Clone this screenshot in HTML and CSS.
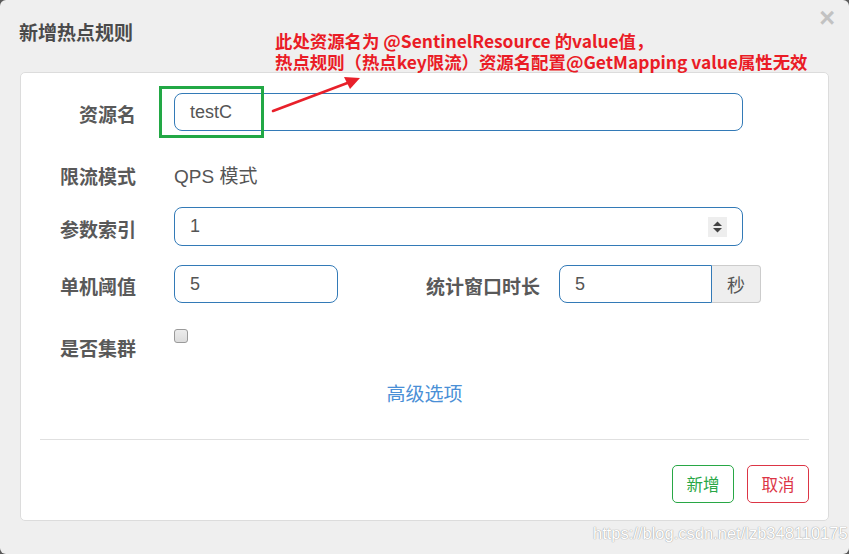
FILE: index.html
```html
<!DOCTYPE html>
<html lang="zh">
<head>
<meta charset="utf-8">
<title>新增热点规则</title>
<link rel="stylesheet" href="styles.css">
</head>
<body>
<div class="modal">
  <div class="modal-header">
    <h4 class="title">新增热点规则</h4>
    <span class="close">×</span>
  </div>
  <div class="card">
    <div class="row r1">
      <label class="lbl">资源名</label>
      <div class="input wide"><span>testC</span></div>
    </div>
    <div class="row r2">
      <label class="lbl">限流模式</label>
      <div class="static">QPS 模式</div>
    </div>
    <div class="row r3">
      <label class="lbl">参数索引</label>
      <div class="input wide num">
        <span>1</span>
        <span class="spin">
          <svg width="19" height="20" viewBox="0 0 19 20"><path d="M9.5 4.5 L14 9 L5 9 Z" fill="#444"/><path d="M5 11 L14 11 L9.5 15.5 Z" fill="#444"/></svg>
        </span>
      </div>
    </div>
    <div class="row r4">
      <label class="lbl">单机阈值</label>
      <div class="input short"><span>5</span></div>
      <label class="lbl lbl2">统计窗口时长</label>
      <div class="group">
        <div class="input ginput"><span>5</span></div>
        <div class="addon">秒</div>
      </div>
    </div>
    <div class="row r5">
      <label class="lbl">是否集群</label>
      <span class="checkbox"></span>
    </div>
    <div class="adv"><a class="link">高级选项</a></div>
    <hr class="sep">
    <div class="footer">
      <button class="btn btn-ok">新增</button>
      <button class="btn btn-cancel">取消</button>
    </div>
  </div>
  <div class="note">
    <div class="note-line">此处资源名为 @SentinelResource 的value值，</div>
    <div class="note-line">热点规则（热点key限流）资源名配置@GetMapping value属性无效</div>
  </div>
  <div class="highlight"></div>
  <svg class="arrow" width="110" height="50" viewBox="0 0 110 50">
    <line x1="3" y1="39" x2="80" y2="10" stroke="#e8202a" stroke-width="2.6" stroke-linecap="round"/>
    <path d="M90 6 L74 5 L80 17 Z" fill="#e8202a"/>
  </svg>
  <div class="watermark">https://blog.csdn.net/lzb348110175</div>
</div>
</body>
</html>
```

FILE: styles.css
```css
html, body {
  margin: 0;
  padding: 0;
  background: #5a5a5a;
  font-family: "Noto Sans CJK SC", "Liberation Sans", sans-serif;
}
.modal {
  position: relative;
  width: 849px;
  height: 554px;
  background: #efefef;
  border-radius: 6px;
  overflow: hidden;
  box-sizing: border-box;
  padding-top: 1px;
}
.modal-header {
  height: 71px;
  position: relative;
}
.title {
  margin: 0;
  padding: 19px 0 0 19px;
  font-size: 19px;
  line-height: 24px;
  font-weight: 700;
  color: #4a4a4a;
}
.close {
  position: absolute;
  right: 14px;
  top: 2px;
  font-family: "Liberation Sans", sans-serif;
  font-size: 27px;
  font-weight: 700;
  color: #c2c2c2;
  line-height: 30px;
}
.card {
  margin-left: 20px;
  width: 809px;
  height: 449px;
  box-sizing: border-box;
  background: #fff;
  border: 1px solid #dcdcdc;
  border-radius: 5px;
  padding: 0 19px;
  display: flex;
  flex-direction: column;
}
.row {
  display: flex;
  align-items: center;
  height: 38px;
  flex: none;
}
.r1 { margin-top: 20px; }
.r2 { margin-top: 24px; }
.r3 { margin-top: 14px; height: 39px; }
.r4 { margin-top: 19px; }
.r5 { margin-top: 25px; align-items: flex-start; }
.lbl {
  width: 96px;
  flex: none;
  text-align: right;
  font-weight: 700;
  font-size: 19px;
  line-height: 24px;
  color: #595959;
  margin-right: 38px;
  padding-top: 4px;
}
.r5 .lbl { padding-top: 8px; }
.lbl2 { width: auto; margin-left: 88px; margin-right: 19px; }
.input {
  box-sizing: border-box;
  height: 100%;
  border: 1px solid #337ab7;
  border-radius: 8px;
  display: flex;
  align-items: center;
  padding-left: 15px;
  font-family: "Liberation Sans", "Noto Sans CJK SC", sans-serif;
  font-size: 18px;
  color: #555;
}
.wide { width: 569px; }
.num { justify-content: space-between; padding-right: 15px; }
.spin {
  width: 19px;
  height: 20px;
  background: #eeeeee;
  display: flex;
}
.short { width: 164px; }
.static {
  font-family: "Liberation Sans", "Noto Sans CJK SC", sans-serif;
  font-size: 19px;
  color: #555;
  padding-top: 1px;
}
.group {
  display: flex;
  height: 100%;
}
.ginput {
  width: 153px;
  border-radius: 8px 0 0 8px;
  padding-left: 15px;
}
.addon {
  width: 49px;
  box-sizing: border-box;
  border: 1px solid #cccccc;
  border-left: none;
  border-radius: 0 4px 4px 0;
  background: #eeeeee;
  display: flex;
  align-items: center;
  justify-content: center;
  font-size: 18px;
  color: #555;
}
.checkbox {
  width: 12px;
  height: 12px;
  margin-top: 1px;
  border: 1px solid #9a9a9a;
  border-radius: 3px;
  background: linear-gradient(#ececec, #dcdcdc);
}
.adv {
  margin-top: 15px;
  height: 24px;
  text-align: center;
  flex: none;
}
.link {
  font-size: 19px;
  line-height: 24px;
  color: #4a8fd6;
}
.sep {
  margin: 34px 0 0 0;
  border: none;
  border-top: 1px solid #e0e0e0;
  height: 0;
  flex: none;
}
.footer {
  margin-top: 25px;
  display: flex;
  justify-content: flex-end;
  gap: 13px;
}
.btn {
  width: 62px;
  height: 38px;
  background: #fff;
  border-radius: 5px;
  font-family: "Noto Sans CJK SC", sans-serif;
  font-size: 16.5px;
  padding: 0;
}
.btn-ok { border: 1px solid #28a745; color: #28a745; }
.btn-cancel { border: 1px solid #dc3545; color: #dc3545; }
.note {
  position: absolute;
  left: 275px;
  top: 30px;
  font-size: 17.4px;
  font-weight: 700;
  color: #ea1c26;
  white-space: nowrap;
}
.note-line {
  height: 21px;
  line-height: 21px;
}
.highlight {
  position: absolute;
  left: 159px;
  top: 86px;
  width: 99px;
  height: 46px;
  border: 3px solid #22a845;
}
.arrow {
  position: absolute;
  left: 270px;
  top: 72px;
}
.watermark {
  position: absolute;
  left: 593px;
  top: 524px;
  font-family: "Liberation Sans", sans-serif;
  font-size: 16.5px;
  color: #ffffff;
  text-shadow: 0 0 1px #999, 0 0 1px #aaa;
}
```
